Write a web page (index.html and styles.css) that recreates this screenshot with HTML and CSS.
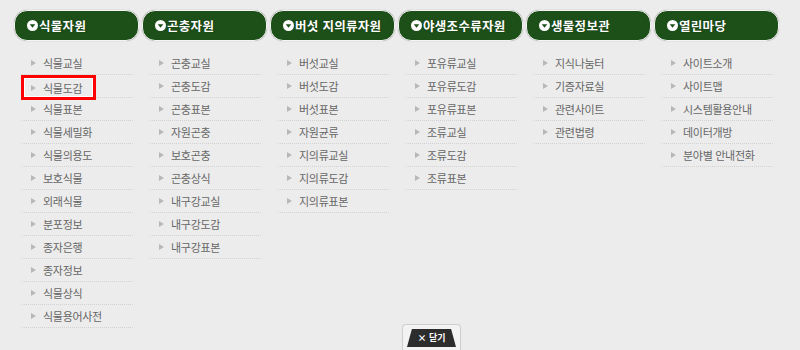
FILE: index.html
```html
<!DOCTYPE html>
<html lang="ko">
<head>
  <meta charset="UTF-8">
  <title>전체메뉴</title>
  <link rel="stylesheet" href="styles.css">
</head>
<body>

<div class="allmenu">
  <ul class="gnb">
    <li>
      <a class="tab" href="#"><svg class="ico" viewBox="0 0 12 12"><circle cx="6" cy="6" r="6" fill="#fff"/><path d="M3 4.5h6L6 8.5z" fill="#1d4f18"/></svg>식물자원</a>
      <ul class="sub">
        <li><a href="#">식물교실</a></li>
        <li><a href="#" class="focus">식물도감</a></li>
        <li><a href="#">식물표본</a></li>
        <li><a href="#">식물세밀화</a></li>
        <li><a href="#">식물의용도</a></li>
        <li><a href="#">보호식물</a></li>
        <li><a href="#">외래식물</a></li>
        <li><a href="#">분포정보</a></li>
        <li><a href="#">종자은행</a></li>
        <li><a href="#">종자정보</a></li>
        <li><a href="#">식물상식</a></li>
        <li><a href="#">식물용어사전</a></li>
      </ul>
    </li>
    <li>
      <a class="tab" href="#"><svg class="ico" viewBox="0 0 12 12"><circle cx="6" cy="6" r="6" fill="#fff"/><path d="M3 4.5h6L6 8.5z" fill="#1d4f18"/></svg>곤충자원</a>
      <ul class="sub">
        <li><a href="#">곤충교실</a></li>
        <li><a href="#">곤충도감</a></li>
        <li><a href="#">곤충표본</a></li>
        <li><a href="#">자원곤충</a></li>
        <li><a href="#">보호곤충</a></li>
        <li><a href="#">곤충상식</a></li>
        <li><a href="#">내구강교실</a></li>
        <li><a href="#">내구강도감</a></li>
        <li><a href="#">내구강표본</a></li>
      </ul>
    </li>
    <li>
      <a class="tab" href="#"><svg class="ico" viewBox="0 0 12 12"><circle cx="6" cy="6" r="6" fill="#fff"/><path d="M3 4.5h6L6 8.5z" fill="#1d4f18"/></svg>버섯 지의류자원</a>
      <ul class="sub">
        <li><a href="#">버섯교실</a></li>
        <li><a href="#">버섯도감</a></li>
        <li><a href="#">버섯표본</a></li>
        <li><a href="#">자원균류</a></li>
        <li><a href="#">지의류교실</a></li>
        <li><a href="#">지의류도감</a></li>
        <li><a href="#">지의류표본</a></li>
      </ul>
    </li>
    <li>
      <a class="tab" href="#"><svg class="ico" viewBox="0 0 12 12"><circle cx="6" cy="6" r="6" fill="#fff"/><path d="M3 4.5h6L6 8.5z" fill="#1d4f18"/></svg>야생조수류자원</a>
      <ul class="sub">
        <li><a href="#">포유류교실</a></li>
        <li><a href="#">포유류도감</a></li>
        <li><a href="#">포유류표본</a></li>
        <li><a href="#">조류교실</a></li>
        <li><a href="#">조류도감</a></li>
        <li><a href="#">조류표본</a></li>
      </ul>
    </li>
    <li>
      <a class="tab" href="#"><svg class="ico" viewBox="0 0 12 12"><circle cx="6" cy="6" r="6" fill="#fff"/><path d="M3 4.5h6L6 8.5z" fill="#1d4f18"/></svg>생물정보관</a>
      <ul class="sub">
        <li><a href="#">지식나눔터</a></li>
        <li><a href="#">기증자료실</a></li>
        <li><a href="#">관련사이트</a></li>
        <li><a href="#">관련법령</a></li>
      </ul>
    </li>
    <li>
      <a class="tab" href="#"><svg class="ico" viewBox="0 0 12 12"><circle cx="6" cy="6" r="6" fill="#fff"/><path d="M3 4.5h6L6 8.5z" fill="#1d4f18"/></svg>열린마당</a>
      <ul class="sub">
        <li><a href="#">사이트소개</a></li>
        <li><a href="#">사이트맵</a></li>
        <li><a href="#">시스템활용안내</a></li>
        <li><a href="#">데이터개방</a></li>
        <li><a href="#">분야별 안내전화</a></li>
      </ul>
    </li>
  </ul>

  <a class="close" href="#"><span>× 닫기</span></a>
</div>

</body>
</html>
```

FILE: styles.css
```css
body {
  margin: 0;
  background: #ececec;
  font-family: "Noto Sans CJK KR", "Noto Sans", sans-serif;
}
.allmenu {
  position: relative;
  height: 350px;
  padding: 10px 0 0 14px;
  box-sizing: border-box;
}
ul {
  list-style: none;
  margin: 0;
  padding: 0;
}
.gnb {
  display: flex;
  gap: 3px;
}
.gnb > li {
  width: 125px;
}
.tab {
  display: flex;
  align-items: center;
  height: 31px;
  box-sizing: border-box;
  padding-left: 12px;
  background: #1d4f18;
  border: 1px solid #f4f4f4;
  border-radius: 13px;
  box-shadow: 0 0 1px 0 #9a9a9a;
  color: #fff;
  font-size: 12.5px;
  font-weight: bold;
  letter-spacing: 0.3px;
  text-decoration: none;
  text-shadow: 0 0 1px #0b2a08;
}
.ico {
  width: 11px;
  height: 11px;
  margin-right: 1px;
}
.sub {
  margin: 11px 6px 0 8px;
}
.sub li {
  height: 22px;
  border-bottom: 1px dotted #d2d2d2;
  display: flex;
  align-items: center;
}
.sub a {
  display: flex;
  align-items: center;
  padding-left: 9px;
  color: #666;
  font-size: 11px;
  letter-spacing: -0.3px;
  text-decoration: none;
}
.sub a::before {
  content: "";
  width: 0;
  height: 0;
  border-left: 5px solid #b8b8b8;
  border-top: 3px solid transparent;
  border-bottom: 3px solid transparent;
  margin-right: 7px;
}
.sub a.focus {
  height: 17px;
  margin-left: 2px;
  padding: 0 10px 0 6px;
  border: 1px solid #fff;
  outline: 3px solid #f00;
  margin-top: 3px;
}
.close {
  position: absolute;
  left: 402px;
  top: 324px;
  width: 59px;
  height: 26px;
  box-sizing: border-box;
  padding: 4px 4px 0;
  background: #f3f3f3;
  border: 1px solid #cfcfcf;
  border-bottom: 0;
  border-radius: 4px 4px 0 0;
  text-decoration: none;
}
.close span {
  display: block;
  height: 18px;
  background: #2c2c2c;
  clip-path: polygon(10% 0, 90% 0, 100% 100%, 0 100%);
  color: #fff;
  font-size: 9px;
  font-weight: bold;
  line-height: 18px;
  text-align: center;
}
```
